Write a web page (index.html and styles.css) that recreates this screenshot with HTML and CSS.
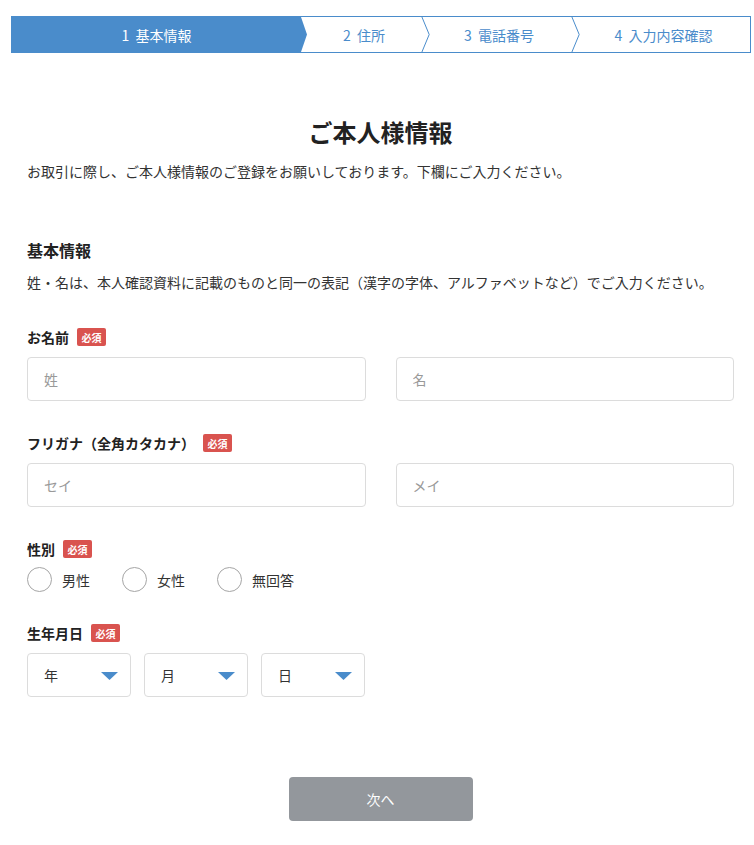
FILE: index.html
```html
<!DOCTYPE html>
<html lang="ja">
<head>
<meta charset="utf-8">
<title>ご本人様情報</title>
<link rel="stylesheet" href="styles.css">
</head>
<body>
<ol class="steps">
  <li class="step step-active"><span class="num">1</span>基本情報</li>
  <li class="step step-2"><span class="num">2</span>住所<svg class="chev" viewBox="0 0 9 37" width="9" height="37"><polyline points="0.5,0 8.2,18.5 0.5,37" fill="none" stroke="#4a8ccb" stroke-width="1"/></svg></li>
  <li class="step step-3"><span class="num">3</span>電話番号<svg class="chev" viewBox="0 0 9 37" width="9" height="37"><polyline points="0.5,0 8.2,18.5 0.5,37" fill="none" stroke="#4a8ccb" stroke-width="1"/></svg></li>
  <li class="step step-4"><span class="num">4</span>入力内容確認</li>
</ol>

<main class="page">
  <h1 class="title">ご本人様情報</h1>
  <p class="lead">お取引に際し、ご本人様情報のご登録をお願いしております。下欄にご入力ください。</p>

  <h2 class="section-title">基本情報</h2>
  <p class="section-note">姓・名は、本人確認資料に記載のものと同一の表記（漢字の字体、アルファベットなど）でご入力ください。</p>

  <div class="field">
    <div class="field-label"><span>お名前</span><span class="badge">必須</span></div>
    <div class="two-col">
      <input class="text-input" type="text" placeholder="姓">
      <input class="text-input" type="text" placeholder="名">
    </div>
  </div>

  <div class="field">
    <div class="field-label"><span>フリガナ（全角カタカナ）</span><span class="badge">必須</span></div>
    <div class="two-col">
      <input class="text-input" type="text" placeholder="セイ">
      <input class="text-input" type="text" placeholder="メイ">
    </div>
  </div>

  <div class="field field-radio">
    <div class="field-label"><span>性別</span><span class="badge">必須</span></div>
    <div class="radios">
      <label class="radio"><span class="radio-circle"></span><span>男性</span></label>
      <label class="radio"><span class="radio-circle"></span><span>女性</span></label>
      <label class="radio"><span class="radio-circle"></span><span>無回答</span></label>
    </div>
  </div>

  <div class="field field-date">
    <div class="field-label"><span>生年月日</span><span class="badge">必須</span></div>
    <div class="selects">
      <div class="select-box"><span>年</span><svg class="caret" viewBox="0 0 17 8" width="17" height="8"><polygon points="0,0 17,0 8.5,8" fill="#4a8ccb"/></svg></div>
      <div class="select-box"><span>月</span><svg class="caret" viewBox="0 0 17 8" width="17" height="8"><polygon points="0,0 17,0 8.5,8" fill="#4a8ccb"/></svg></div>
      <div class="select-box"><span>日</span><svg class="caret" viewBox="0 0 17 8" width="17" height="8"><polygon points="0,0 17,0 8.5,8" fill="#4a8ccb"/></svg></div>
    </div>
  </div>

  <div class="actions">
    <button class="btn-next" type="button">次へ</button>
  </div>
</main>
</body>
</html>
```

FILE: styles.css
```css
* {
  box-sizing: border-box;
}

html, body {
  margin: 0;
  padding: 0;
  background: #fff;
}

body {
  font-family: "Noto Sans CJK JP", "Noto Sans", "Liberation Sans", sans-serif;
  font-size: 14px;
  color: #333;
}

/* Stepper */
.steps {
  list-style: none;
  margin: 16px 3px 0 11px;
  padding: 0;
  display: flex;
  height: 37px;
  border: 1px solid #4a8ccb;
}

.step {
  position: relative;
  display: flex;
  align-items: center;
  justify-content: center;
  height: 35px;
  color: #4a8ccb;
  font-size: 14px;
  line-height: 1;
}

.num {
  margin-right: 6px;
}

.step-active {
  flex: 1 1 auto;
  background: #4a8ccb;
  color: #fff;
  padding-right: 6px;
  clip-path: polygon(0 0, calc(100% - 6px) 0, 100% 50%, calc(100% - 6px) 100%, 0 100%);
}

.step-2 {
  flex: 0 0 114px;
}

.step-3 {
  flex: 0 0 150px;
  padding-left: 6px;
}

.step-4 {
  flex: 0 0 179px;
  padding-left: 6px;
}

.chev {
  position: absolute;
  top: -1px;
  right: -9px;
  z-index: 1;
}

/* Page */
.page {
  margin: 0 20px 0 27px;
}

.title {
  margin: 61px 0 0;
  text-align: center;
  font-size: 24px;
  line-height: 36px;
  font-weight: 700;
  color: #222;
}

.lead {
  margin: 11px 0 0;
  line-height: 21px;
}

.section-title {
  margin: 56px 0 0;
  font-size: 16px;
  line-height: 24px;
  font-weight: 700;
  color: #222;
}

.section-note {
  margin: 10px 0 0;
  line-height: 21px;
}

.field {
  margin-top: 35px;
}

.field + .field {
  margin-top: 33px;
}

.field-label {
  display: flex;
  align-items: center;
  gap: 8px;
  height: 18px;
  font-weight: 700;
  color: #222;
  margin-bottom: 11px;
}

.badge {
  display: inline-flex;
  align-items: center;
  justify-content: center;
  width: 29px;
  height: 18px;
  border-radius: 2px;
  background: #d9534f;
  color: #fff;
  font-size: 10px;
  font-weight: 700;
}

.two-col {
  display: grid;
  grid-template-columns: 1fr 1fr;
  column-gap: 30px;
}

.text-input {
  display: block;
  width: 100%;
  height: 44px;
  margin: 0;
  padding: 0 16px;
  border: 1px solid #dcdcdc;
  border-radius: 4px;
  font-family: inherit;
  font-size: 14px;
  color: #333;
  background: #fff;
}

.text-input::placeholder {
  color: #999;
}

.field-radio .field-label {
  margin-bottom: 9px;
}

.field.field-date {
  margin-top: 32px;
}

.radios {
  display: flex;
  gap: 32px;
}

.radio {
  display: flex;
  align-items: center;
  gap: 10px;
  height: 25px;
  line-height: 1;
}

.radio-circle {
  display: block;
  width: 25px;
  height: 25px;
  border: 1px solid #a5a5a5;
  border-radius: 50%;
}

.selects {
  display: flex;
  gap: 13px;
}

.select-box {
  display: flex;
  align-items: center;
  justify-content: space-between;
  width: 104px;
  height: 44px;
  padding: 0 12px 0 16px;
  border: 1px solid #dcdcdc;
  border-radius: 4px;
  color: #333;
}

.caret {
  display: block;
  margin-top: 1px;
}

.actions {
  display: flex;
  justify-content: center;
  margin-top: 80px;
  padding-bottom: 24px;
}

.btn-next {
  width: 184px;
  height: 44px;
  border: none;
  border-radius: 4px;
  background: #93979c;
  color: #fff;
  font-family: inherit;
  font-size: 14px;
}
```
